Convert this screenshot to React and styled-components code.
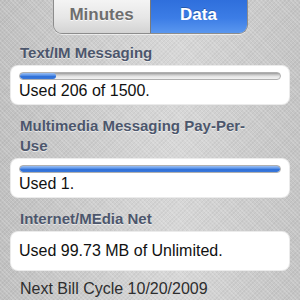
import React from 'react';
import styled, { createGlobalStyle } from 'styled-components';

const GlobalStyle = createGlobalStyle`
  html, body {
    margin: 0;
    padding: 0;
  }
  body {
    font-family: "Liberation Sans", Arial, sans-serif;
  }
`;

// textured silver background of the page
const Screen = styled.div`
  width: 300px;
  height: 300px;
  overflow: hidden;
  display: flex;
  flex-direction: column;
  background:
    repeating-linear-gradient(45deg, rgba(255,255,255,0.16) 0 1px, transparent 1px 3px),
    repeating-linear-gradient(-45deg, rgba(0,0,0,0.04) 0 1px, transparent 1px 3px),
    linear-gradient(90deg, #c0c0c0 0%, #d3d3d3 45%, #d7d7d7 60%, #c4c4c4 100%);
`;

const SegmentBar = styled.div`
  align-self: center;
  display: flex;
  width: 193px;
  height: 33px;
  border: 1px solid #8c8c8c;
  border-top: none;
  border-radius: 0 0 9px 9px;
  overflow: hidden;
  box-shadow: 0 1px 0 rgba(255,255,255,0.6);
`;

const Segment = styled.div`
  flex: 1;
  display: flex;
  align-items: center;
  justify-content: center;
  font-size: 17px;
  font-weight: bold;
  padding-bottom: 4px;
  color: ${p => (p.$active ? '#fff' : '#6e6e6e')};
  text-shadow: ${p => (p.$active ? '0 -1px 0 rgba(0,0,0,0.25)' : '0 1px 0 rgba(255,255,255,0.8)')};
  background: ${p =>
    p.$active
      ? 'linear-gradient(180deg, #2f6fdc 0%, #3c7de6 55%, #5a97ef 100%)'
      : 'linear-gradient(180deg, #f4f4f4 0%, #e6e6e6 55%, #d3d3d3 100%)'};
  & + & {
    border-left: 1px solid #7a7a7a;
  }
`;

const Content = styled.div`
  display: flex;
  flex-direction: column;
  padding: 9px 10px 0;
`;

const SectionTitle = styled.div`
  padding: 0 10px;
  width: 248px;
  font-size: 15px;
  line-height: 20px;
  font-weight: bold;
  color: #4c566c;
  text-shadow: 0 1px 0 rgba(255,255,255,0.6);
  margin-bottom: 2px;
`;

const Card = styled.div`
  background: #fff;
  border-radius: 8px;
  border: 1px solid rgba(0,0,0,0.08);
  padding: ${p => (p.$withBar ? '6px 8px 3px' : '9px 8px 9px')};
  margin-bottom: 11px;
  box-sizing: border-box;
`;

const Track = styled.div`
  height: 8px;
  border-radius: 4px;
  background: linear-gradient(180deg, #9a9a9a 0%, #c8c8c8 30%, #e6e6e6 60%, #f2f2f2 100%);
  border: 1px solid #b0b0b0;
  box-sizing: border-box;
  overflow: hidden;
  margin-bottom: 1px;
`;

const Fill = styled.div`
  height: 100%;
  border-radius: 4px;
  background: linear-gradient(180deg, #9cc0f4 0%, #5a93e8 40%, #2f6fd6 60%, #3a79dc 100%);
`;

const CardText = styled.div`
  font-size: 16px;
  line-height: 20px;
  color: #111;
`;

const Footer = styled.div`
  padding: 0 10px;
  font-size: 16px;
  line-height: 20px;
  color: #2e2e2e;
  margin-top: -3px;
`;

const usage = [
  { title: 'Text/IM Messaging', used: 206, total: 1500, text: 'Used 206 of 1500.' },
  { title: 'Multimedia Messaging Pay-Per-Use', used: 1, total: 1, text: 'Used 1.' },
  { title: 'Internet/MEdia Net', text: 'Used 99.73 MB of Unlimited.' },
];

export default function App() {
  return (
    <Screen>
      <GlobalStyle />
      <SegmentBar>
        <Segment>Minutes</Segment>
        <Segment $active>Data</Segment>
      </SegmentBar>
      <Content>
        {usage.map(u => (
          <React.Fragment key={u.title}>
            <SectionTitle>{u.title}</SectionTitle>
            <Card $withBar={u.total != null}>
              {u.total != null && (
                <Track>
                  <Fill style={{ width: `${Math.max(13, (u.used / u.total) * 100)}%` }} />
                </Track>
              )}
              <CardText>{u.text}</CardText>
            </Card>
          </React.Fragment>
        ))}
        <Footer>Next Bill Cycle 10/20/2009</Footer>
      </Content>
    </Screen>
  );
}
